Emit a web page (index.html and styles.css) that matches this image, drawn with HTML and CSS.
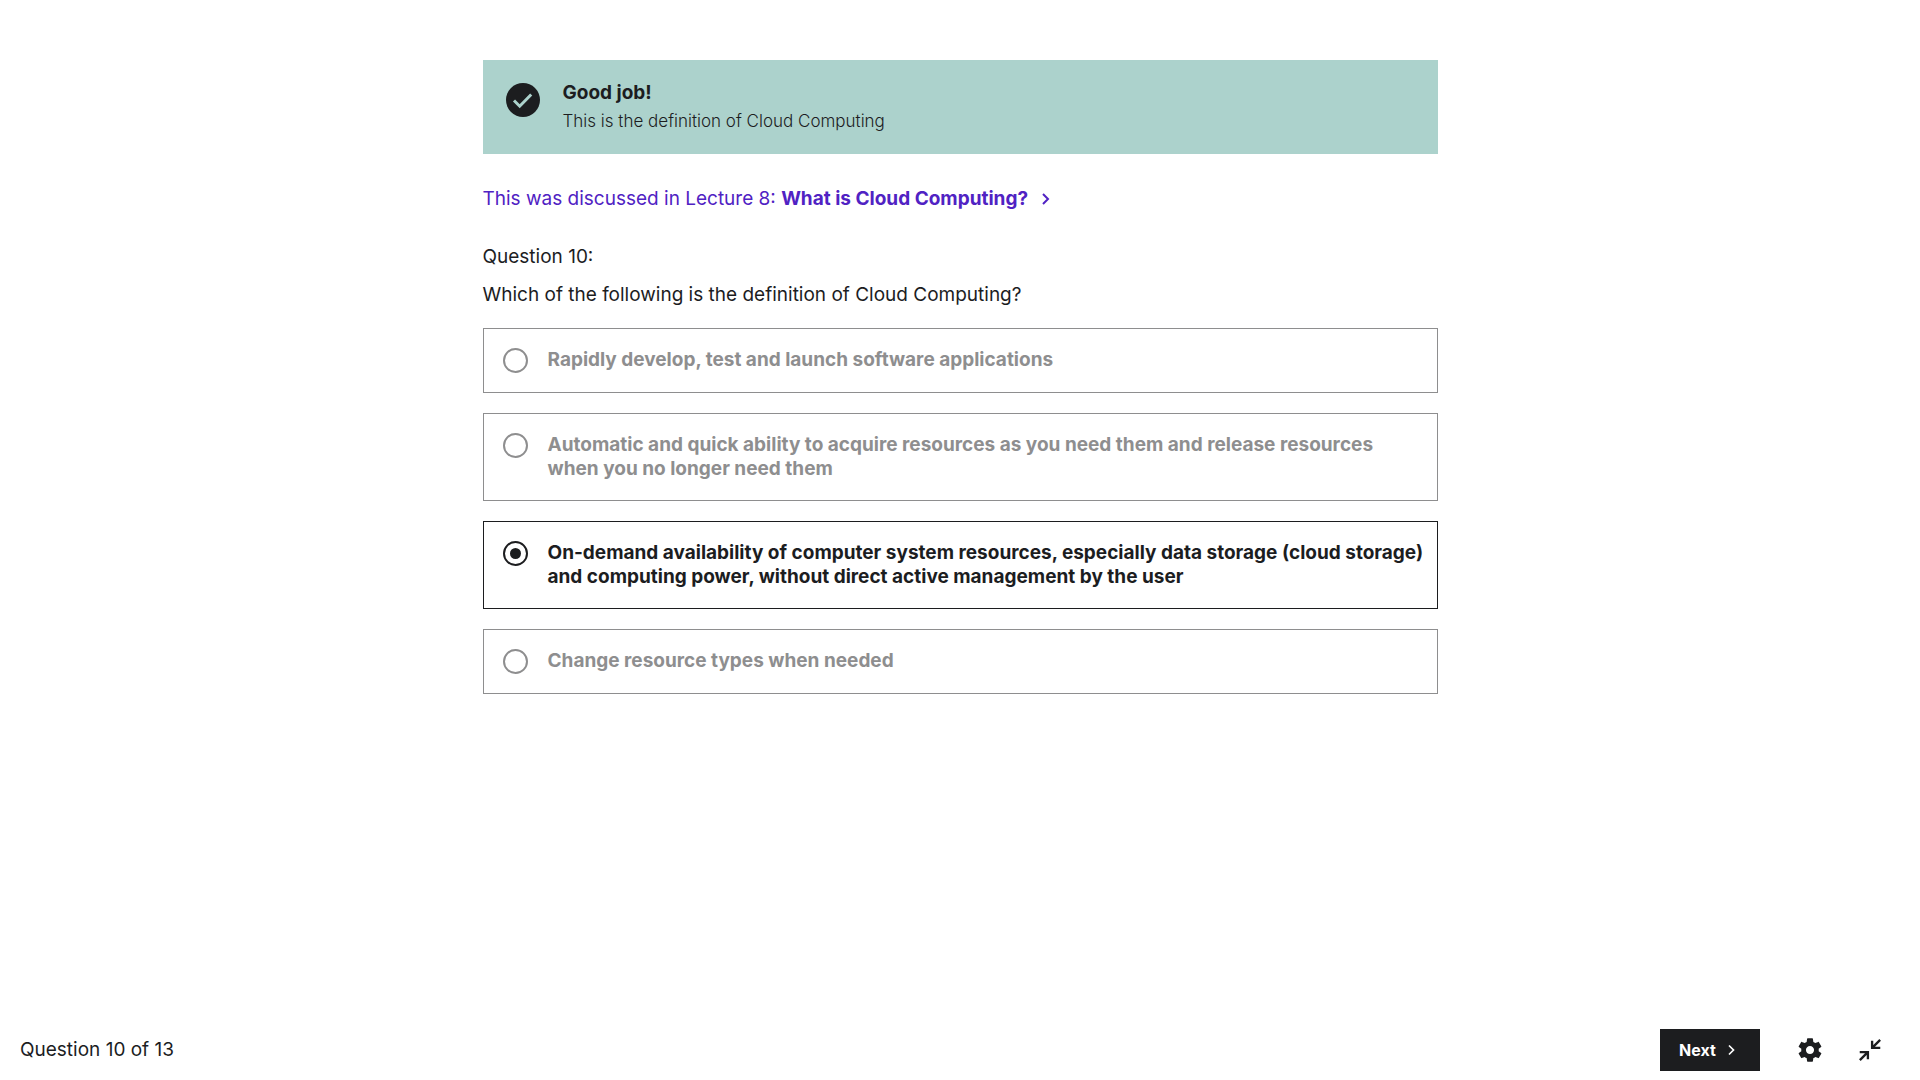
FILE: index.html
```html
<!DOCTYPE html>
<html lang="en">
<head>
<meta charset="utf-8">
<title>Quiz – Question 10</title>
<meta name="viewport" content="width=device-width, initial-scale=1">
<link rel="stylesheet" href="styles.css">
</head>
<body>
<main class="quiz">
  <section class="feedback" role="status">
    <svg class="feedback-icon" viewBox="0 0 40 40" aria-hidden="true">
      <circle cx="20" cy="20" r="17" fill="#1c1d1f"/>
      <path d="M11 20.5 16.7 26.2 28.2 14.5" fill="none" stroke="#acd2cc" stroke-width="3"/>
    </svg>
    <div>
      <h2 class="feedback-title">Good job!</h2>
      <p class="feedback-text">This is the definition of Cloud Computing</p>
    </div>
  </section>

  <a class="lecture-link" href="#lecture-8">
    <span>This was discussed in Lecture 8: <strong>What is Cloud Computing?</strong></span>
    <svg class="chevron" viewBox="0 0 12 12" aria-hidden="true"><path d="M3 1 8 6 3 11" fill="none" stroke="currentColor" stroke-width="2"/></svg>
  </a>

  <form id="question">
    <fieldset class="question">
      <legend class="question-head">
        <span class="question-number">Question 10:</span>
        <span class="question-prompt">Which of the following is the definition of Cloud Computing?</span>
      </legend>
      <div class="options">
        <label class="option">
          <input class="radio" type="radio" name="answer" disabled>
          <span>Rapidly develop, test and launch software applications</span>
        </label>
        <label class="option">
          <input class="radio" type="radio" name="answer" disabled>
          <span>Automatic and quick ability to acquire resources as you need them and release resources when you no longer need them</span>
        </label>
        <label class="option option-selected">
          <input class="radio" type="radio" name="answer" checked>
          <span>On-demand availability of computer system resources, especially data storage (cloud storage) and computing power, without direct active management by the user</span>
        </label>
        <label class="option">
          <input class="radio" type="radio" name="answer" disabled>
          <span>Change resource types when needed</span>
        </label>
      </div>
    </fieldset>
  </form>
</main>

<footer class="footer">
  <span class="progress">Question 10 of 13</span>
  <button class="next" type="button">Next
    <svg class="chevron" viewBox="0 0 12 12" aria-hidden="true"><path d="M4 1.500 8.500 6 4 10.500" fill="none" stroke="currentColor" stroke-width="1.700"/></svg>
  </button>
  <div class="tools">
    <button class="tool" type="button" aria-label="Settings">
      <svg class="tool-icon" viewBox="0 0 24 24" aria-hidden="true"><path fill="currentColor" d="M19.43 12.98c.04-.32.07-.64.07-.98s-.03-.66-.07-.98l2.110-1.650c.19-.15.24-.42.12-.64l-2-3.460c-.12-.22-.39-.3-.61-.22l-2.490 1c-.52-.4-1.080-.73-1.690-.98l-.38-2.650C14.460 2.180 14.250 2 14 2h-4c-.25 0-.46.18-.49.42l-.38 2.650c-.61.25-1.170.59-1.690.98l-2.490-1c-.23-.09-.49 0-.61.22l-2 3.460c-.13.22-.07.49.12.64l2.110 1.650c-.04.32-.07.65-.07.98s.03.66.07.98l-2.110 1.650c-.19.15-.24.42-.12.64l2 3.460c.12.22.39.3.61.22l2.490-1c.52.4 1.080.73 1.690.98l.38 2.650c.03.24.24.42.49.42h4c.25 0 .46-.18.49-.42l.38-2.650c.61-.25 1.170-.59 1.690-.98l2.490 1c.23.09.49 0 .61-.22l2-3.460c.12-.22.07-.49-.12-.64l-2.110-1.650zM12 15.500c-1.930 0-3.500-1.570-3.500-3.500s1.570-3.500 3.500-3.500 3.500 1.570 3.500 3.500-1.570 3.500-3.500 3.500z"/></svg>
    </button>
    <button class="tool" type="button" aria-label="Exit full screen">
      <svg class="tool-icon" viewBox="0 0 24 24" aria-hidden="true"><path fill="none" stroke="currentColor" stroke-width="2" d="M20.700 3.300 14.500 9.500M13.800 4v6.200h7M3.300 20.700 9.500 14.500M10.200 20v-6.200h-7"/></svg>
    </button>
  </div>
</footer>
</body>
</html>
```
FILE: styles.css
```css
* { box-sizing: border-box; }

body {
  display: flex;
  flex-direction: column;
  min-height: 100vh;
  margin: 0;
  background: #fff;
  color: #1c1d1f;
  font: 400 19px/24px Inter, "Liberation Sans", sans-serif;
}

.quiz {
  flex: 1;
  width: 100%;
  max-width: 955px;
  margin: 0 auto;
  padding: 60px 0;
}

.feedback {
  display: flex;
  gap: 20px;
  padding: 20px;
  background: #acd2cc;
}

.feedback-icon { flex: none; width: 40px; height: 40px; }

.feedback-title { margin: 0 0 2px; font-size: 19px; line-height: 26px; }

.feedback-text { margin: 0; font-size: 17px; font-weight: 300; line-height: 26px; }

.lecture-link {
  display: flex;
  align-items: center;
  gap: 12px;
  margin: 33px 0 34px;
  color: #5022c3;
  text-decoration: none;
}

.chevron { flex: none; width: 12px; height: 12px; }

.question { min-width: 0; margin: 0; padding: 0; border: 0; }

.question-head { padding: 0; }

.question-number,
.question-prompt { display: block; margin-bottom: 14px; }

.options { display: grid; gap: 20px; padding-top: 7px; }

.option {
  display: flex;
  gap: 20px;
  padding: 19px 10px 19px 19px;
  border: 1px solid #8e8e8f;
  color: #8e8e8f;
  font-weight: 700;
}

.option-selected { border-color: #1c1d1f; color: #1c1d1f; }

.radio {
  display: grid;
  flex: none;
  place-content: center;
  width: 25px;
  height: 25px;
  margin: 0;
  border: 2px solid currentColor;
  border-radius: 50%;
  appearance: none;
  color: inherit;
}

.radio:checked::before {
  width: 11px;
  height: 11px;
  border-radius: 50%;
  background: currentColor;
  content: "";
}

.footer {
  display: flex;
  align-items: center;
  gap: 20px;
  height: 60px;
  padding: 0 20px;
}

.progress { flex: 1; }

.next {
  display: flex;
  align-items: center;
  justify-content: space-between;
  width: 100px;
  height: 42px;
  padding: 0 23px 0 19px;
  border: 0;
  background: #1c1d1f;
  color: #fff;
  font: 700 16px/24px Inter, "Liberation Sans", sans-serif;
}

.tools { display: flex; }

.tool {
  display: grid;
  place-items: center;
  width: 60px;
  height: 42px;
  padding: 0;
  border: 0;
  background: none;
  color: #1c1d1f;
}

.tool-icon { width: 28px; height: 28px; }
```
